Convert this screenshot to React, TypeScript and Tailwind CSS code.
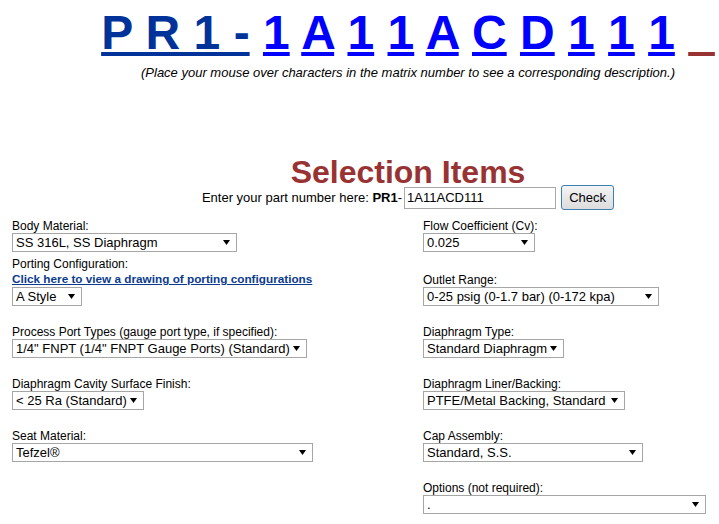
import React, { Fragment } from "react";

const Arrow = () => (
  <svg width="7" height="5" viewBox="0 0 7 5" className="shrink-0">
    <path d="M0 0H7L3.5 5Z" fill="#000" />
  </svg>
);

function Sel({ text, className }: { text: string; className: string }) {
  return (
    <div
      className={
        "flex h-[19px] items-center justify-between border border-[#a6a6a6] bg-white pl-[3px] pr-[6px] text-[13px] leading-[15px] text-black whitespace-nowrap " +
        className
      }
    >
      <span>{text}</span>
      <Arrow />
    </div>
  );
}

function Label({ text, className = "" }: { text: string; className?: string }) {
  return (
    <div className={"h-[14px] text-[12px] leading-[14px] whitespace-nowrap text-black " + className}>
      {text}
    </div>
  );
}

const chars = ["1", "A", "1", "1", "A", "C", "D", "1", "1", "1"];

export default function App() {
  return (
    <div className="h-[524px] w-[719px] overflow-hidden bg-white font-['Liberation_Sans',Arial,sans-serif] text-black">
      <div className="w-[816px] text-center">
        <div className="whitespace-nowrap pt-[5px] text-[48px] font-bold leading-[56px]">
          <span className="text-[#003399] underline">P R 1 -</span>{" "}
          {chars.map((c, i) => (
            <Fragment key={i}>
              <a className="cursor-pointer text-[#0000ff] underline">{c}</a>{" "}
            </Fragment>
          ))}
          <span className="text-[#993333] underline">{"\u00a0\u00a0"}</span>
        </div>
        <p className="mt-[4px] text-[13px] italic leading-[15px]">
          (Place your mouse over characters in the matrix number to see a corresponding description.)
        </p>
        <h1 className="mt-[80px] h-[25px] text-[32px] font-bold leading-[25px] text-[#993333]">
          Selection Items
        </h1>
        <div className="flex h-[25px] items-center justify-center text-[13px] leading-[15px]">
          <span className="whitespace-pre">Enter your part number here: </span>
          <b>PR1</b>
          <span>-</span>
          <input
            readOnly
            value="1A11ACD111"
            className="ml-[2px] h-[22px] w-[152px] border border-[#a9a9a9] bg-white px-[2px] text-[13px] text-black outline-none"
          />
          <button className="ml-[5px] h-[25px] w-[53px] rounded-[3px] border border-[#3c7fb1] bg-linear-to-b from-[#f4f4f4] to-[#dcdcdc] text-[13px] text-black">
            Check
          </button>
        </div>
      </div>

      <div className="mt-[9px] flex">
        <div className="flex w-[423px] flex-col items-start pl-[12px]">
          <Label text="Body Material:" />
          <Sel text="SS 316L, SS Diaphragm" className="w-[225px]" />
          <Label text="Porting Configuration:" className="mt-[5px]" />
          <a className="h-[16px] cursor-pointer whitespace-nowrap text-[11.75px] font-bold leading-[16px] text-[#0b3b8f] underline">
            Click here to view a drawing of porting configurations
          </a>
          <Sel text="A Style" className="w-[70px]" />
          <Label text="Process Port Types (gauge port type, if specified):" className="mt-[19px]" />
          <Sel text={'1/4" FNPT (1/4" FNPT Gauge Ports) (Standard)'} className="w-[295px]" />
          <Label text="Diaphragm Cavity Surface Finish:" className="mt-[19px]" />
          <Sel text="< 25 Ra (Standard)" className="w-[132px]" />
          <Label text="Seat Material:" className="mt-[19px]" />
          <Sel text="Tefzel®" className="w-[301px]" />
        </div>
        <div className="flex flex-col items-start">
          <Label text="Flow Coefficient (Cv):" />
          <Sel text="0.025" className="w-[112px]" />
          <Label text="Outlet Range:" className="mt-[21px]" />
          <Sel text="0-25 psig (0-1.7 bar) (0-172 kpa)" className="w-[236px]" />
          <Label text="Diaphragm Type:" className="mt-[19px]" />
          <Sel text="Standard Diaphragm" className="w-[141px]" />
          <Label text="Diaphragm Liner/Backing:" className="mt-[19px]" />
          <Sel text="PTFE/Metal Backing, Standard" className="w-[202px]" />
          <Label text="Cap Assembly:" className="mt-[19px]" />
          <Sel text="Standard, S.S." className="w-[220px]" />
          <Label text="Options (not required):" className="mt-[19px]" />
          <Sel text="." className="w-[283px]" />
        </div>
      </div>
    </div>
  );
}
